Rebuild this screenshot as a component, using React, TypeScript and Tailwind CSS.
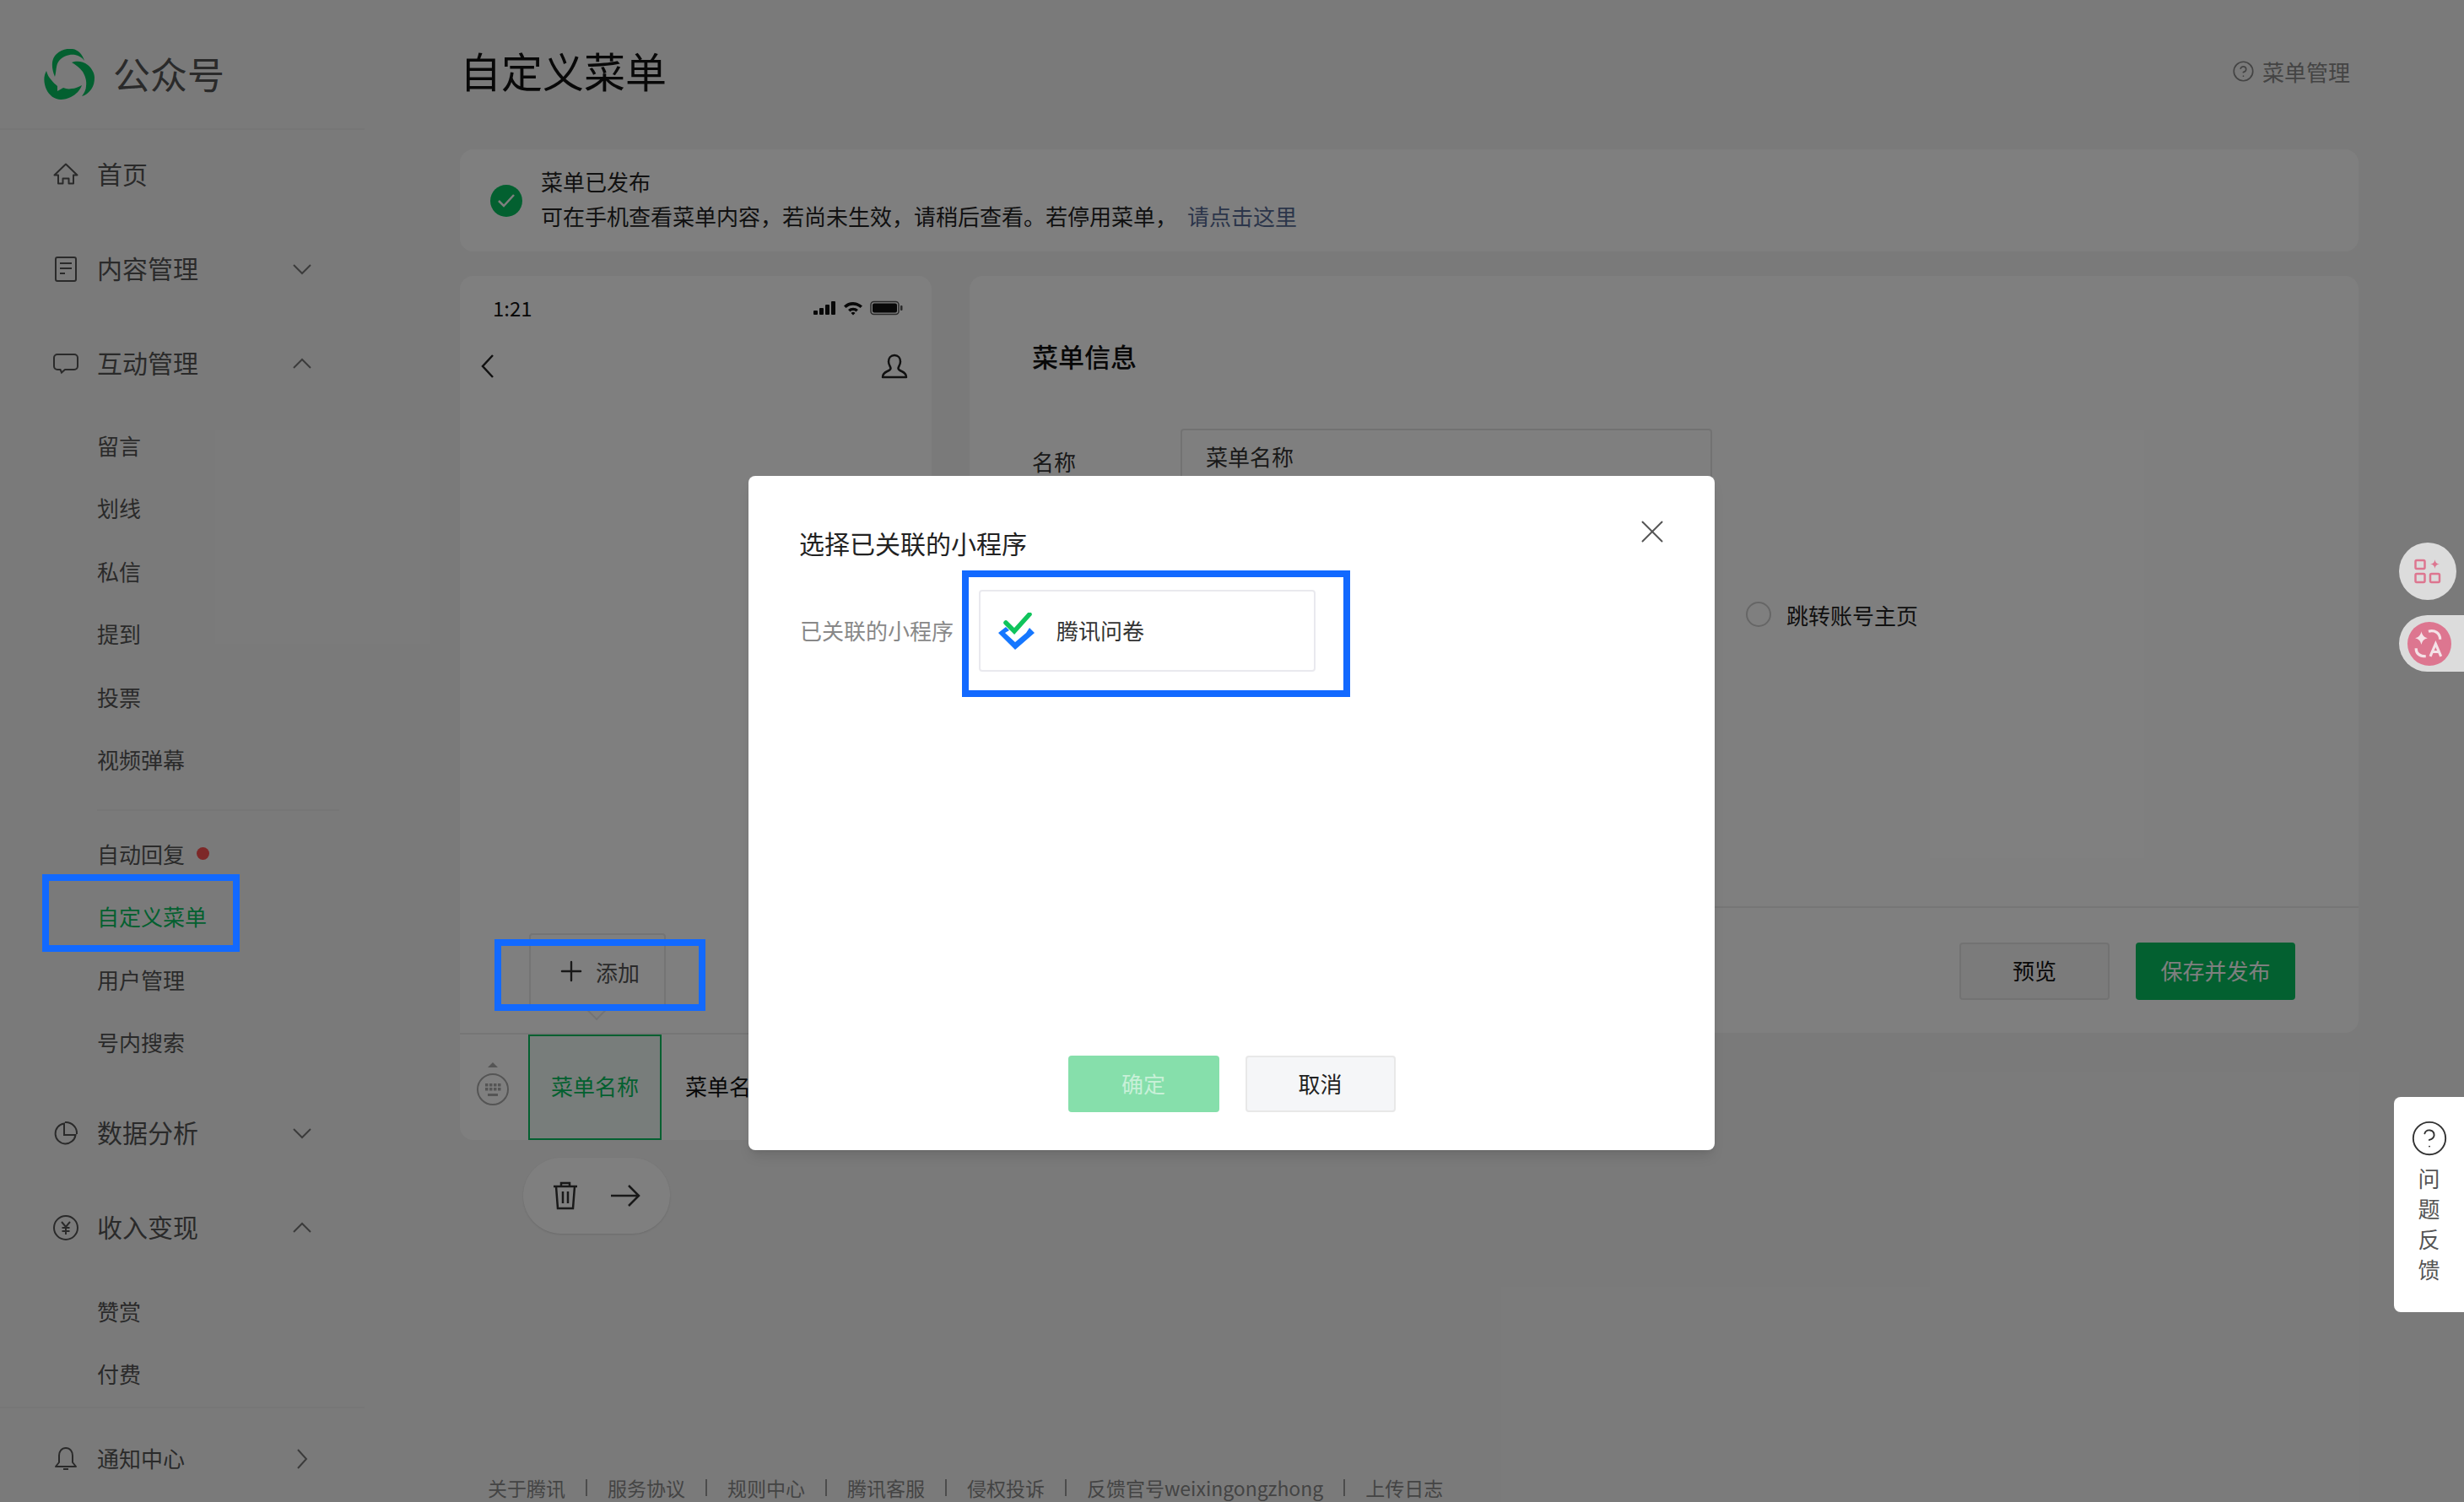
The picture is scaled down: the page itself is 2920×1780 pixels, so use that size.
import React from "react";
import { CircleHelp, Plus, X } from "lucide-react";

const Svg = ({ size = 30, children }: { size?: number; children: React.ReactNode }) => (
  <svg width={size} height={size} viewBox="0 0 30 30" fill="none" stroke="currentColor" strokeWidth="2">
    {children}
  </svg>
);

const HomeIcon = () => (
  <Svg>
    <path d="M15 2.500 1.500 15.500H6v10h5.500v-6h7v6H24v-10h4.500Z" strokeLinejoin="round" />
  </Svg>
);
const DocIcon = () => (
  <Svg>
    <rect x="3" y="1" width="24" height="28" rx="2" />
    <path d="M8 8h14M8 14h14M8 20h6" />
  </Svg>
);
const ChatIcon = () => (
  <Svg>
    <path d="M5 4h20a4 4 0 0 1 4 4v10a4 4 0 0 1-4 4H14l-4 3.500L8.500 22H5a4 4 0 0 1-4-4V8a4 4 0 0 1 4-4Z" />
  </Svg>
);
const PieIcon = () => (
  <Svg>
    <path d="M13 3.500A12 12 0 1 0 26.500 17H13Z" />
    <path d="M14 2a13 13 0 0 1 14 14" />
  </Svg>
);
const YenIcon = () => (
  <Svg>
    <circle cx="15" cy="15" r="14" />
    <path d="m10 8 5 6 5-6M15 14v9M10.500 15h9M10.500 19h9" />
  </Svg>
);
const BellIcon = () => (
  <Svg>
    <path d="M15 2c-5 0-8 4-8 9v8l-4 5h24l-4-5v-8c0-5-3-9-8-9Z" strokeLinejoin="round" />
    <path d="M12 27h6" />
  </Svg>
);

const Chevron = ({ dir }: { dir: "down" | "up" | "right" }) => {
  const d = dir === "down" ? "M1 2l10 10L21 2" : dir === "up" ? "M1 12 11 2l10 10" : "M6 1l10 11L6 23";
  return (
    <svg width="22" height={dir === "right" ? 24 : 14} viewBox={dir === "right" ? "0 0 22 24" : "0 0 22 14"} fill="none" stroke="#777" strokeWidth="2">
      <path d={d} />
    </svg>
  );
};

const Logo = () => (
  <svg width="60" height="60" viewBox="0 0 60 60" fill="#07c160">
    <path d="M13 33C9 24 8 12 15 6 20 1 28-1 34 0c7 1 12 7 14 14-3-4-6-6-11-7-6-1-14 1-19 7-4 5-3 12-5 19Z" />
    <path d="M33 16c5-2 13-2 19 3 5 4 8 10 8 15 0 5-1 10-4 14-3 4-7 7-11 8 3-4 5-8 5-12 1-6-1-12-4-17-4-5-8-8-13-11Z" />
    <path d="M3 26c1 4 3 8 6 11 2 3 5 5 7 7v6l7-4c3 1 6 2 10 1 4 0 8-2 12-4-2 6-7 11-13 14-4 2-8 3-12 3C13 60 6 55 3 48 0 41-1 33 3 26Z" />
  </svg>
);

const NavGroup = ({ icon, label, chevron, small }: { icon: React.ReactNode; label: string; chevron?: "down" | "up" | "right"; small?: boolean }) => (
  <div className={`flex h-[112px] items-center pl-[63px] pr-[63px] text-[#555] ${small ? "text-[26px]" : "text-[30px]"}`}>
    <span className="mr-[22px] flex w-[30px] justify-center">{icon}</span>
    <span className="pb-[4px]">{label}</span>
    {chevron && (
      <span className="ml-auto">
        <Chevron dir={chevron} />
      </span>
    )}
  </div>
);

const SubItem = ({ label, active, dot }: { label: string; active?: boolean; dot?: boolean }) => (
  <div className={`flex h-[74.500px] items-center pl-[115px] text-[26px] ${active ? "text-[#07c160]" : "text-[#555]"}`}>
    {label}
    {dot && <span className="ml-[14px] h-[15px] w-[15px] rounded-full bg-[#fa5151]" />}
  </div>
);

const Sidebar = () => (
  <aside className="w-[432px] shrink-0">
    <div className="flex h-[154px] items-center border-b-2 border-[#ececec] pl-[52px] pt-[24px]">
      <Logo />
      <span className="ml-[22px] pb-[2px] text-[44px] text-[#555]">公众号</span>
    </div>
    <div className="-mt-[3px]">
      <NavGroup icon={<HomeIcon />} label="首页" />
      <NavGroup icon={<DocIcon />} label="内容管理" chevron="down" />
      <NavGroup icon={<ChatIcon />} label="互动管理" chevron="up" />
      <div className="pt-[3px]">
        {["留言", "划线", "私信", "提到", "投票", "视频弹幕"].map((t) => (
          <SubItem key={t} label={t} />
        ))}
      </div>
      <div className="mb-[13px] ml-[115px] mr-[30px] mt-[22px] border-t-2 border-[#ececec]" />
      <SubItem label="自动回复" dot />
      <SubItem label="自定义菜单" active />
      <SubItem label="用户管理" />
      <SubItem label="号内搜索" />
      <div className="pt-[15px]">
        <NavGroup icon={<PieIcon />} label="数据分析" chevron="down" />
        <NavGroup icon={<YenIcon />} label="收入变现" chevron="up" />
      </div>
      <div className="pt-[5px]">
        <SubItem label="赞赏" />
        <SubItem label="付费" />
      </div>
      <div className="mt-[2px] border-t-2 border-[#ececec]" />
      <div className="mt-[4px]">
        <NavGroup icon={<BellIcon />} label="通知中心" chevron="right" small />
      </div>
    </div>
  </aside>
);

const StatusIcons = () => (
  <svg width="108" height="18" viewBox="0 0 108 18" fill="#111">
    <rect x="0" y="12" width="5" height="5" rx="1" />
    <rect x="7" y="9" width="5" height="8" rx="1" />
    <rect x="14" y="5" width="5" height="12" rx="1" />
    <rect x="21" y="1" width="5" height="16" rx="1" />
    <path d="M36 6.500a16 16 0 0 1 22 0l-2.500 2.500a12.500 12.500 0 0 0-17 0ZM41 11a9 9 0 0 1 12 0l-2.500 2.500a5.500 5.500 0 0 0-7 0ZM44.500 15a3.500 3.500 0 0 1 5 0L47 17.500Z" />
    <rect x="68" y="1.500" width="33" height="15" rx="3.500" fill="none" stroke="#555" strokeWidth="1.500" />
    <rect x="70" y="3.500" width="29" height="11" rx="2" />
    <rect x="103" y="6" width="2.500" height="6" rx="1" fill="#555" />
  </svg>
);

const KeyboardIcon = () => (
  <svg width="40" height="52" viewBox="0 0 40 52" fill="#aaa">
    <path d="M20 0l6 6H14Z" />
    <circle cx="20" cy="32" r="18" fill="none" stroke="#aaa" strokeWidth="2" />
    {[25, 30].map((y) =>
      [10, 15, 20, 25].map((x) => <rect key={`${x}-${y}`} x={x + 1} y={y} width="3.500" height="3.500" />)
    )}
    <rect x="14" y="37" width="12" height="3" />
  </svg>
);

const PhonePanel = () => (
  <div className="w-[559px] shrink-0">
    <div className="flex h-[1024px] flex-col overflow-hidden rounded-[16px] bg-white">
      <div className="flex h-[76px] items-center justify-between pl-[39px] pr-[32px]">
        <span className="text-[24px] text-[#111]">1:21</span>
        <StatusIcons />
      </div>
      <div className="flex h-[62px] items-center justify-between pl-[24px] pr-[28px]">
        <svg width="18" height="30" viewBox="0 0 18 30" fill="none" stroke="#222" strokeWidth="2.500">
          <path d="M15 2 3 15l12 13" />
        </svg>
        <svg width="32" height="30" viewBox="0 0 32 30" fill="none" stroke="#222" strokeWidth="2.500">
          <path d="M16 2c-4.500 0-7 3.500-7 7.500 0 4 2.500 6 2.500 8 0 1.500-1.500 2.500-4 3.500C4 22.500 2 24 2 28h28c0-4-2-5.500-5.500-7-2.500-1-4-2-4-3.500 0-2 2.500-4 2.500-8C23 5.500 20.500 2 16 2Z" strokeLinejoin="round" />
        </svg>
      </div>
      <div className="flex flex-1 items-end pb-[28px] pl-[82px]">
        <div className="relative flex h-[90px] w-[162px] items-center justify-center gap-[10px] rounded-[4px] border-2 border-[#e8e8e8] text-[26px] text-[#555]">
          <Plus size={38} strokeWidth={1.500} className="text-[#333]" />
          添加
          <span className="absolute -bottom-[11px] left-[68px] h-[20px] w-[20px] rotate-45 border-b-2 border-r-2 border-[#e8e8e8] bg-white" />
        </div>
      </div>
      <div className="flex h-[127px] items-stretch border-t-2 border-[#ececec] pl-[81px] text-[26px]">
        <div className="relative -ml-[81px] w-[81px]">
          <span className="absolute left-[19px] top-[33px]">
            <KeyboardIcon />
          </span>
        </div>
        <div className="flex w-[158px] items-center justify-center border-2 border-[#07c160] bg-[#07c160]/6 pb-[4px] text-[#07c160]">菜单名称</div>
        <div className="flex w-[158px] items-center justify-center pb-[4px] pl-[2px] text-[#111]">菜单名称</div>
      </div>
    </div>
    <div className="ml-[75px] mt-[21px] flex h-[90px] w-[174px] items-center justify-center gap-[38px] rounded-full bg-white shadow-sm">
      <svg width="30" height="34" viewBox="0 0 30 34" fill="none" stroke="#333" strokeWidth="2.500">
        <path d="M1 6h28M10 6V2h10v4M4 6l2 26h18l2-26M12 12v14M18 12v14" />
      </svg>
      <svg width="36" height="28" viewBox="0 0 36 28" fill="none" stroke="#333" strokeWidth="2.500">
        <path d="M1 14h33M22 2l12 12-12 12" />
      </svg>
    </div>
  </div>
);

const EditorPanel = () => (
  <div className="flex h-[897px] flex-1 flex-col rounded-[16px] bg-white">
    <div className="pl-[74px] pt-[74px] text-[31px] font-medium leading-[42px] text-[#111]">菜单信息</div>
    <div className="mt-[65px] flex items-start pl-[74px] text-[26px]">
      <span className="w-[176px] pt-[19px] text-[#333]">名称</span>
      <div className="h-[76px] w-[630px] rounded-[4px] border-2 border-[#e5e5e5] pl-[28px] pt-[11px] text-[#333]">菜单名称</div>
    </div>
    <div className="ml-[920px] mt-[124px] flex h-[40px] items-center gap-[18px] text-[26px] text-[#222]">
      <span className="h-[30px] w-[30px] rounded-full border-2 border-[#ccc]" />
      跳转账号主页
    </div>
    <div className="mt-auto flex h-[150px] items-start justify-end gap-[31px] border-t-2 border-[#ececec] pr-[75px] pt-[41px] text-[26px]">
      <button className="h-[68px] w-[178px] rounded-[4px] border-2 border-[#e5e5e5] bg-[#f7f7f7] pb-[4px] text-[#111]">预览</button>
      <button className="h-[68px] w-[189px] rounded-[4px] bg-[#07c160] pb-[4px] text-white">保存并发布</button>
    </div>
  </div>
);

const FOOTER = ["关于腾讯", "服务协议", "规则中心", "腾讯客服", "侵权投诉", "反馈官号weixingongzhong", "上传日志"];

const Main = () => (
  <main className="flex flex-1 flex-col pl-[113px] pr-[125px]">
    <div className="flex h-[177px] items-start justify-between pt-[49px]">
      <h1 className="text-[49px] leading-[68px] text-[#111]">自定义菜单</h1>
      <div className="flex items-center gap-[9px] pr-[10px] pt-[16px] text-[26px] text-[#888]">
        <CircleHelp size={27} strokeWidth={1.500} />
        菜单管理
      </div>
    </div>
    <div className="flex h-[121px] items-center rounded-[16px] bg-white pl-[36px] text-[26px] text-[#222]">
      <span className="mr-[22px] flex h-[38px] w-[38px] items-center justify-center rounded-full bg-[#07c160]">
        <svg width="22" height="18" viewBox="0 0 22 18" fill="none" stroke="#fff" strokeWidth="2.500">
          <path d="m2 9 6 6L20 2" />
        </svg>
      </span>
      <div className="pb-[6px] leading-[41px]">
        <div>菜单已发布</div>
        <div>
          可在手机查看菜单内容，若尚未生效，请稍后查看。若停用菜单，
          <span className="ml-[12px] text-[#576b95]">请点击这里</span>
        </div>
      </div>
    </div>
    <div className="mt-[29px] flex gap-[45px]">
      <PhonePanel />
      <EditorPanel />
    </div>
    <div className="mt-auto flex h-[34px] items-center gap-[24px] whitespace-nowrap pl-[33px] text-[23px] text-[#888]">
      {FOOTER.map((t, i) => (
        <React.Fragment key={t}>
          {i > 0 && <span className="h-[20px] w-[2px] bg-[#999]" />}
          <span>{t}</span>
        </React.Fragment>
      ))}
    </div>
  </main>
);

const MiniProgramLogo = () => (
  <svg width="44" height="44" viewBox="0 0 44 44" fill="none">
    <path d="M9 17 0 24l20 20 23-20-6-6-4 6-13 11L8 24l5-3Z" fill="#1677ff" />
    <path d="m9 12 10 10L37 2" stroke="#10c45c" strokeWidth="5.500" strokeLinecap="round" />
  </svg>
);

const Dialog = () => (
  <div className="absolute left-[887px] top-[564px] flex h-[799px] w-[1145px] flex-col rounded-[8px] bg-white shadow-lg">
    <div className="flex items-start justify-between pl-[60px] pr-[51px] pt-[47px]">
      <span className="text-[30px] leading-[64px] text-[#222]">选择已关联的小程序</span>
      <X size={46} strokeWidth={1} className="mt-[-4px] text-[#555]" />
    </div>
    <div className="mt-[24px] flex items-center pl-[61px]">
      <span className="w-[212px] pb-[2px] text-[26px] text-[#888]">已关联的小程序</span>
      <div className="flex h-[97px] w-[399px] items-center gap-[25px] rounded-[4px] border-2 border-[#e9e9ee] pl-[21px] text-[26px] text-[#333]">
        <MiniProgramLogo />
        <span className="pb-[2px]">腾讯问卷</span>
      </div>
    </div>
    <div className="mt-auto flex justify-center gap-[31px] pb-[45px] text-[26px]">
      <button className="h-[67px] w-[179px] rounded-[4px] bg-[#86dfab] pb-[2px] text-[#c8f0d8]">确定</button>
      <button className="h-[67px] w-[178px] rounded-[4px] border-2 border-[#e8e8e8] bg-[#f5f6f8] pb-[2px] text-[#222]">取消</button>
    </div>
  </div>
);

const FloatButtons = () => (
  <>
    <div className="absolute left-[2843px] top-[643px] flex h-[68px] w-[68px] items-center justify-center rounded-full bg-[#dcdcdc]">
      <svg width="32" height="30" viewBox="0 0 32 30" fill="none" stroke="#dd7690" strokeWidth="2.500">
        <rect x="1.500" y="2" width="11" height="10" rx="1.500" />
        <rect x="1.500" y="18" width="11" height="10" rx="1.500" />
        <rect x="19" y="18" width="11" height="10" rx="1.500" />
        <path d="M24.500 1c.5 3.500 2 5 5.500 5.500-3.500.5-5 2-5.500 5.500-.5-3.500-2-5-5.500-5.500 3.500-.5 5-2 5.500-5.500Z" fill="#dd7690" stroke="none" />
      </svg>
    </div>
    <div className="absolute left-[2843px] top-[729px] flex h-[67px] w-[77px] items-center rounded-l-full bg-[#dcdcdc] pl-[10px]">
      <span className="flex h-[52px] w-[52px] items-center justify-center rounded-full bg-[#dd7690]">
        <svg width="38" height="36" viewBox="0 0 36 34" fill="none" stroke="#f4e2e7" strokeWidth="3">
          <path d="M9 3c1 4.500 3 6.500 7 7.500-4 1-6 3-7 7.500-1-4.500-3-6.500-7-7.500 4-1 6-3 7-7.500Z" fill="#f4e2e7" stroke="none" />
          <path d="M17 3c7-2 13 2 13 9M3 22c0 6 4 9 11 9" />
          <path d="M19 31l6-14 6 14M21 26h8" />
        </svg>
      </span>
    </div>
    <div className="absolute left-[2837px] top-[1300px] flex h-[255px] w-[83px] flex-col items-center rounded-l-[8px] bg-white pt-[26px] text-[26px] leading-[36px] text-[#555]">
      <CircleHelp size={46} strokeWidth={1} className="mb-[6px] text-[#333]" />
      <span>问</span>
      <span>题</span>
      <span>反</span>
      <span>馈</span>
    </div>
  </>
);

const Mark = ({ className }: { className: string }) => (
  <div className={`absolute border-[8px] border-[#1269ff] ${className}`} />
);

export default function App() {
  return (
    <div className="relative flex h-[1780px] w-[2920px] overflow-hidden bg-[#f5f5f5] [font-family:'Noto_Sans_CJK_SC',sans-serif]">
      <Sidebar />
      <Main />
      <div className="absolute inset-0 bg-black/50" />
      <Dialog />
      <FloatButtons />
      <Mark className="left-[50px] top-[1036px] h-[92px] w-[234px]" />
      <Mark className="left-[586px] top-[1113px] h-[85px] w-[250px]" />
      <Mark className="left-[1140px] top-[676px] h-[150px] w-[460px]" />
    </div>
  );
}
